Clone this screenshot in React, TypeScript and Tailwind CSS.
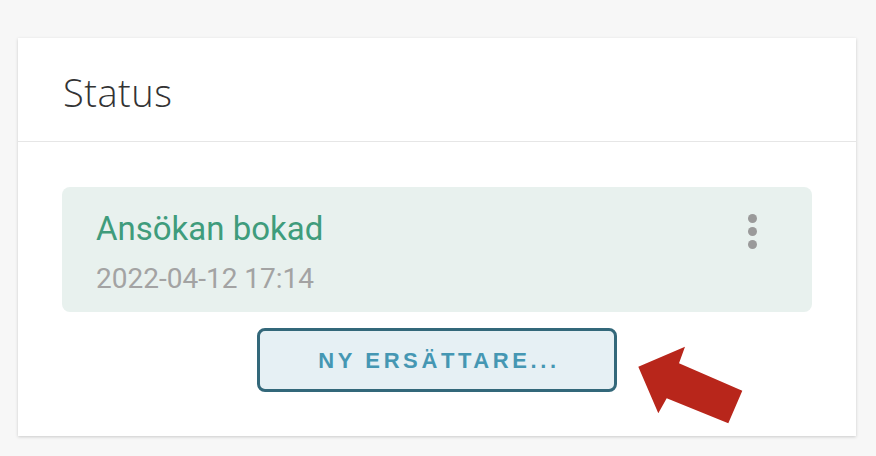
import React from "react";

export default function App() {
  return (
    <div className="relative w-full min-h-[456px] bg-[#f7f7f7] pt-[38px] pl-[18px] pr-[20px]">
      <div className="bg-white h-[398px] shadow-[0_1px_3px_rgba(0,0,0,0.18)] flex flex-col">
        <div className="h-[104px] border-b border-[#e6e6e6] pl-[45px] pt-[29px]">
          <div className="text-[38px] leading-[50px] font-light tracking-[0.5px] text-[#333] [font-family:'Open_Sans',sans-serif]">
            Status
          </div>
        </div>
        <div className="px-[44px] pt-[45px] flex flex-col items-center [font-family:Roboto,sans-serif]">
          <div className="w-full h-[125px] rounded-[8px] bg-[#e8f1ee] pl-[34px] pt-[23px] pr-[55px] flex">
            <div className="flex-1">
              <div className="text-[33px] leading-[38px] text-[#3f9c7c]">Ansökan bokad</div>
              <div className="mt-[15px] text-[28px] leading-[32px] text-[#a3a3a3]">2022-04-12 17:14</div>
            </div>
            <div className="mt-[4px] flex flex-col gap-[4px] items-center">
              <span className="block w-[9px] h-[9px] rounded-full bg-[#9a9a9a]" />
              <span className="block w-[9px] h-[9px] rounded-full bg-[#9a9a9a]" />
              <span className="block w-[9px] h-[9px] rounded-full bg-[#9a9a9a]" />
            </div>
          </div>
          <button className="mt-[16px] w-[360px] h-[64px] rounded-[8px] border-[3px] border-[#33687a] bg-[#e6f0f4] flex items-center justify-center">
            <span className="pl-[4px] text-[22px] font-bold tracking-[3.6px] text-[#4597b3] [font-family:'Liberation_Sans',Arial,sans-serif]">
              NY ERSÄTTARE...
            </span>
          </button>
        </div>
      </div>
      <svg
        className="absolute left-[630px] top-[340px] pointer-events-none"
        width="120"
        height="90"
        viewBox="630 340 120 90"
      >
        <polygon
          points="638.3,366.7 685,346.7 679,363.3 742.3,390.7 728.3,423.3 666.7,398.3 658.3,413.3"
          fill="#b8261b"
        />
      </svg>
    </div>
  );
}
